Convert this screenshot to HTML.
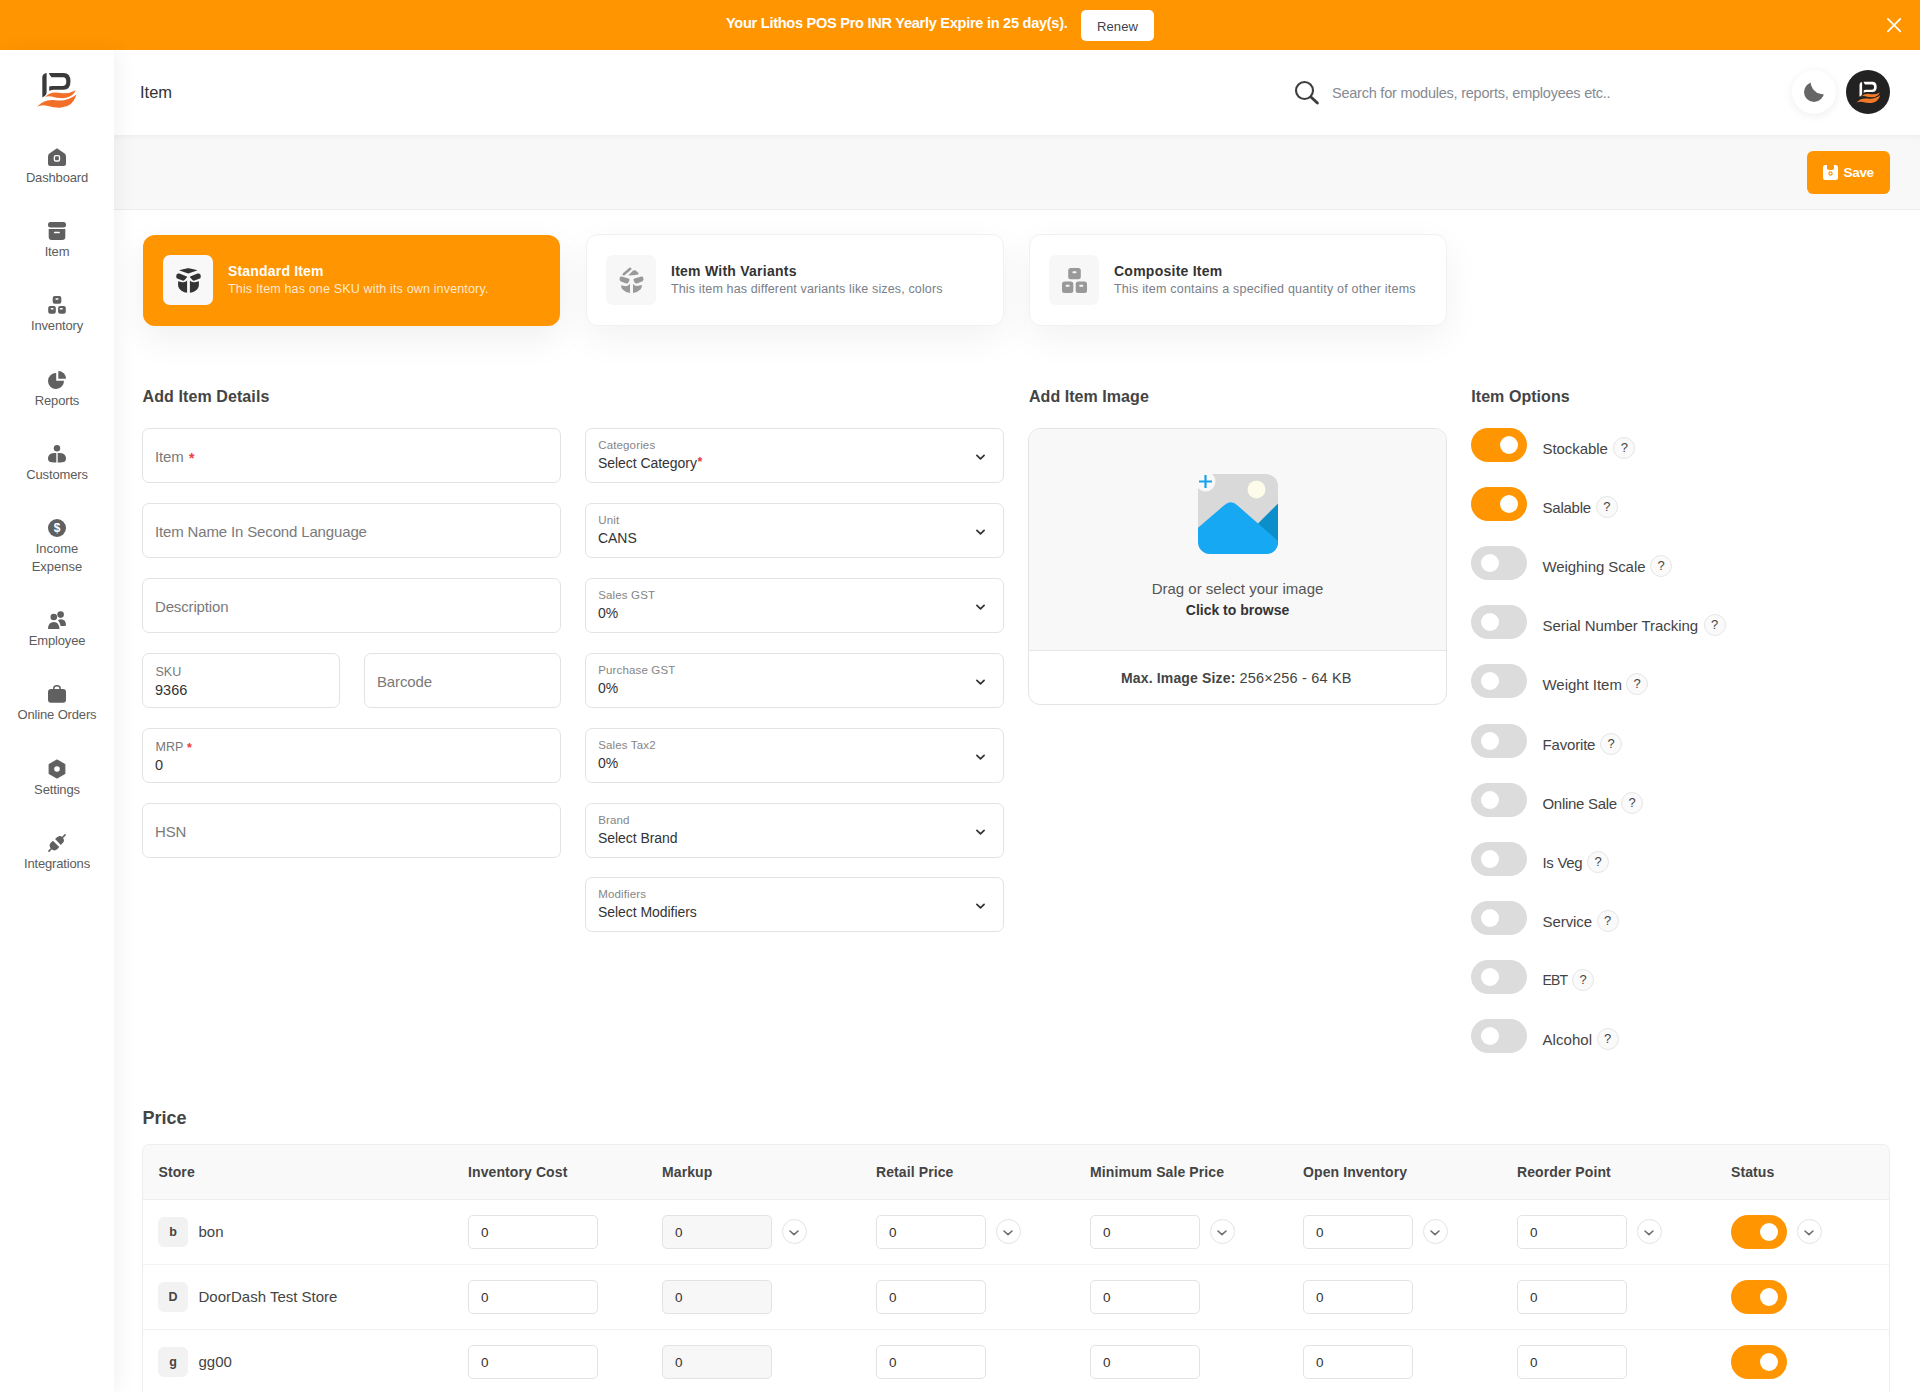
<!DOCTYPE html><html><head><meta charset="utf-8"><style>
*{box-sizing:border-box;margin:0;padding:0}
html,body{width:1920px;height:1392px;overflow:hidden;background:#fff;font-family:"Liberation Sans", sans-serif;color:#333}
.a{position:absolute}
.t{position:absolute;white-space:nowrap;line-height:1}
svg{position:absolute;overflow:visible}
</style></head><body>
<div class="a" style="left:0px;top:0px;width:1920px;height:50px;background:#ff9500"></div>
<div class="t" style="left:726px;top:16.29px;font-size:14.6px;color:#fff;font-weight:bold;letter-spacing:-0.29px;">Your Lithos POS Pro INR Yearly Expire in 25 day(s).</div>
<div class="a" style="left:1081px;top:10px;width:73px;height:31px;background:#fff;border-radius:5px"></div>
<div class="t" style="left:1097px;top:20.10px;font-size:13px;color:#3b4350;font-weight:normal;letter-spacing:0.1px;">Renew</div>
<svg style="left:1886px;top:17px" width="16" height="16" viewBox="0 0 16 16"><path d="M1.9 1.9L14.3 14.3M14.3 1.9L1.9 14.3" stroke="#fff" stroke-width="1.7" stroke-linecap="round"/></svg>
<div class="a" style="left:114px;top:50px;width:1806px;height:85px;background:#fff"></div>
<div class="a" style="left:114px;top:135px;width:1806px;height:75px;background:#f8f8f8;border-bottom:1px solid #ececec;box-shadow:inset 0 7px 9px -7px rgba(0,0,0,0.07)"></div>
<div class="t" style="left:140px;top:84.15px;font-size:16.5px;color:#333;font-weight:normal;">Item</div>
<svg style="left:1294px;top:80px" width="26" height="26" viewBox="0 0 26 26"><circle cx="10.5" cy="10.5" r="8.5" fill="none" stroke="#3d3d3d" stroke-width="2.1"/><path d="M17.2 17.2L23.4 23" stroke="#3d3d3d" stroke-width="2.9" stroke-linecap="round"/></svg>
<div class="t" style="left:1332px;top:85.61px;font-size:14.5px;color:#868a92;font-weight:normal;letter-spacing:-0.23px;">Search for modules, reports, employees etc..</div>
<div class="a" style="left:1792px;top:70px;width:44px;height:44px;background:#fff;border-radius:50%;box-shadow:0 2px 10px rgba(0,0,0,0.07)"></div>
<svg style="left:1804px;top:82px" width="20" height="20" viewBox="0 0 20 20"><defs><mask id="mm"><rect x="-5" y="-5" width="30" height="30" fill="#fff"/><circle cx="19.4" cy="-0.6" r="12.8" fill="#000"/></mask></defs><circle cx="10" cy="10" r="10" fill="#666" mask="url(#mm)"/></svg>
<div class="a" style="left:1846px;top:70px;width:44px;height:44px;background:#222;border-radius:50%"></div>
<svg style="left:1851.5px;top:74px" width="36.6" height="36.6" viewBox="0 0 60 60"><path d="M16.6 13 L16.6 32.5 Q16.6 34.5 15 35.8 L12.3 37.5 L12.3 17.5 Q12.3 13.6 16.6 13 Z" fill="#fff"/><path d="M19 12.9 L33.5 12.9 Q40.5 12.9 40.5 21.3 Q40.5 29.7 33.5 29.7 L23.5 29.7 Q20 29.9 19.2 31 L19.2 26.5 Q20.2 25.9 22.5 25.9 L33 25.9 Q36.3 25.9 36.3 21.5 Q36.3 17.2 33 17.2 L21.5 17.2 Q19.5 15.5 19 12.9Z" fill="#fff"/><path d="M14.7 37.5 Q20 31.5 28 32.8 Q38 34.5 45.9 30.2 Q42 37.8 33 38.2 Q26 38.2 21.5 36.5 Q17 35.5 14.7 37.5Z" fill="#f47a2a"/><path d="M7.1 47 Q14 38.5 26 40.3 Q36.5 42 46.5 34.5 Q43 46.5 31.5 47.6 Q24 48 18 46 Q11 44.3 7.1 47Z" fill="#f47a2a"/></svg>
<div class="a" style="left:1807px;top:151px;width:83px;height:43px;background:#ff9500;border-radius:6px"></div>
<svg style="left:1823px;top:165px" width="15" height="15" viewBox="0 0 15 15"><path d="M2.5 0 H4 V3.2 Q4 5 7.5 5 Q11 5 11 3.2 V0 H12.5 Q15 0 15 2.5 V12.5 Q15 15 12.5 15 H2.5 Q0 15 0 12.5 V2.5 Q0 0 2.5 0Z" fill="#fff"/><circle cx="7.5" cy="8.5" r="1.6" fill="none" stroke="#ff9500" stroke-width="1.2"/></svg>
<div class="t" style="left:1843.5px;top:165.74px;font-size:13.5px;color:#fff;font-weight:bold;letter-spacing:-0.3px;">Save</div>
<div class="a" style="left:0px;top:50px;width:114px;height:1342px;background:#fff;box-shadow:5px 0 18px rgba(0,0,0,0.05)"></div>
<svg style="left:30px;top:60px" width="60" height="60" viewBox="0 0 60 60"><path d="M16.6 13 L16.6 32.5 Q16.6 34.5 15 35.8 L12.3 37.5 L12.3 17.5 Q12.3 13.6 16.6 13 Z" fill="#3a3a3a"/><path d="M19 12.9 L33.5 12.9 Q40.5 12.9 40.5 21.3 Q40.5 29.7 33.5 29.7 L23.5 29.7 Q20 29.9 19.2 31 L19.2 26.5 Q20.2 25.9 22.5 25.9 L33 25.9 Q36.3 25.9 36.3 21.5 Q36.3 17.2 33 17.2 L21.5 17.2 Q19.5 15.5 19 12.9Z" fill="#3a3a3a"/><path d="M14.7 37.5 Q20 31.5 28 32.8 Q38 34.5 45.9 30.2 Q42 37.8 33 38.2 Q26 38.2 21.5 36.5 Q17 35.5 14.7 37.5Z" fill="#f26f2a"/><path d="M7.1 47 Q14 38.5 26 40.3 Q36.5 42 46.5 34.5 Q43 46.5 31.5 47.6 Q24 48 18 46 Q11 44.3 7.1 47Z" fill="#f26f2a"/></svg>
<svg style="left:48px;top:148px" width="18" height="18" viewBox="0 0 18 18"><path d="M9 0.3 L16.6 5.5 Q18 6.5 18 8.2 V15.5 Q18 18 15.5 18 H2.5 Q0 18 0 15.5 V8.2 Q0 6.5 1.4 5.5Z" fill="#606060"/><rect x="6.4" y="7.6" width="5.1" height="5.4" rx="1.3" fill="none" stroke="#fff" stroke-width="1.35"/></svg>
<div class="t" style="left:0px;width:114px;text-align:center;top:171.30px;font-size:13px;color:#5c5c5c;font-weight:normal;letter-spacing:-0.15px;">Dashboard</div>
<svg style="left:48px;top:222px" width="18" height="18" viewBox="0 0 18 18"><rect x="0" y="0" width="18" height="5.5" rx="2.5" fill="#606060"/><path d="M0.7 7 H17.3 V15 Q17.3 18 14.3 18 H3.7 Q0.7 18 0.7 15Z" fill="#606060"/><rect x="5.9" y="9.8" width="6" height="1.5" rx="0.7" fill="#fff"/></svg>
<div class="t" style="left:0px;width:114px;text-align:center;top:245.30px;font-size:13px;color:#5c5c5c;font-weight:normal;letter-spacing:-0.15px;">Item</div>
<svg style="left:48px;top:296px" width="18" height="18" viewBox="0 0 18 18"><rect x="4.7" y="0" width="8.6" height="7.8" rx="2" fill="#606060"/><rect x="0.2" y="9.9" width="7.6" height="7.8" rx="2" fill="#606060"/><rect x="10.1" y="9.9" width="7.7" height="7.8" rx="2" fill="#606060"/><rect x="7.5" y="2.2" width="3" height="1.5" rx="0.4" fill="#fff"/><rect x="2.8" y="11.9" width="2.7" height="1.5" rx="0.4" fill="#fff"/><rect x="11.8" y="11.9" width="2.9" height="1.5" rx="0.4" fill="#fff"/></svg>
<div class="t" style="left:0px;width:114px;text-align:center;top:319.30px;font-size:13px;color:#5c5c5c;font-weight:normal;letter-spacing:-0.15px;">Inventory</div>
<svg style="left:48px;top:371px" width="18" height="18" viewBox="0 0 18 18"><path d="M8.2 2 A8 8 0 1 0 16 9.8 H8.2Z" fill="#606060"/><path d="M10.3 0 A7.8 7.8 0 0 1 18 7.7 H10.3Z" fill="#606060"/></svg>
<div class="t" style="left:0px;width:114px;text-align:center;top:394.30px;font-size:13px;color:#5c5c5c;font-weight:normal;letter-spacing:-0.15px;">Reports</div>
<svg style="left:48px;top:445px" width="18" height="18" viewBox="0 0 18 18"><circle cx="9" cy="3.2" r="3.2" fill="#606060"/><path d="M8.3 8 V17.5 Q3 17.5 1.2 16.5 Q0 15.6 0 13.5 Q0 9.5 4 8.3 Q6 7.8 8.3 8Z" fill="#606060"/><path d="M9.7 8 V17.5 Q15 17.5 16.8 16.5 Q18 15.6 18 13.5 Q18 9.5 14 8.3 Q12 7.8 9.7 8Z" fill="#606060"/></svg>
<div class="t" style="left:0px;width:114px;text-align:center;top:468.30px;font-size:13px;color:#5c5c5c;font-weight:normal;letter-spacing:-0.15px;">Customers</div>
<svg style="left:48px;top:519px" width="18" height="18" viewBox="0 0 18 18"><circle cx="9" cy="9" r="9" fill="#606060"/><text x="9" y="13.3" text-anchor="middle" font-family="Liberation Sans" font-weight="bold" font-size="12" fill="#fff">$</text></svg>
<div class="t" style="left:0px;width:114px;text-align:center;top:542.30px;font-size:13px;color:#5c5c5c;font-weight:normal;">Income</div>
<div class="t" style="left:0px;width:114px;text-align:center;top:560.30px;font-size:13px;color:#5c5c5c;font-weight:normal;">Expense</div>
<svg style="left:48px;top:611px" width="18" height="18" viewBox="0 0 18 18"><circle cx="5.8" cy="6" r="3.3" fill="#606060"/><circle cx="12.6" cy="3.6" r="3.3" fill="#606060"/><path d="M0 18 Q0 11 6 11 Q11 11 11.5 18Z" fill="#606060"/><path d="M10 9.2 Q11.2 8.2 13 8.2 Q18 8.2 18 14.2 Q18 15 16.5 15 H12.6 Q12 11.5 10 9.2Z" fill="#606060"/></svg>
<div class="t" style="left:0px;width:114px;text-align:center;top:634.30px;font-size:13px;color:#5c5c5c;font-weight:normal;letter-spacing:-0.15px;">Employee</div>
<svg style="left:48px;top:685px" width="18" height="18" viewBox="0 0 18 18"><path d="M5.75 5 V3.6 Q5.75 0.7 9 0.7 Q12.2 0.7 12.2 3.6 V5" fill="none" stroke="#606060" stroke-width="1.5"/><rect x="0" y="4" width="18" height="13.7" rx="3" fill="#606060"/></svg>
<div class="t" style="left:0px;width:114px;text-align:center;top:708.30px;font-size:13px;color:#5c5c5c;font-weight:normal;letter-spacing:-0.15px;">Online Orders</div>
<svg style="left:48px;top:760px" width="18" height="18" viewBox="0 0 18 18"><path d="M9 0 L16.8 4.5 V13.5 L9 18 L1.2 13.5 V4.5Z" fill="#606060" stroke="#606060" stroke-width="1.2" stroke-linejoin="round"/><circle cx="9" cy="9" r="2.8" fill="#fff"/></svg>
<div class="t" style="left:0px;width:114px;text-align:center;top:783.30px;font-size:13px;color:#5c5c5c;font-weight:normal;letter-spacing:-0.15px;">Settings</div>
<svg style="left:48px;top:834px" width="18" height="18" viewBox="0 0 18 18"><g transform="rotate(45 9 9)"><path d="M4.9 7.6 V5.4 Q4.9 1.1 9 1.1 Q13.1 1.1 13.1 5.4 V7.6Z" fill="#606060"/><rect x="8.2" y="-3.2" width="1.6" height="5.2" rx="0.8" fill="#606060"/><path d="M4.5 10.3 H13.5 V12.9 Q13.5 17.2 9 17.2 Q4.5 17.2 4.5 12.9Z" fill="#606060"/><rect x="8.2" y="16" width="1.6" height="5.2" rx="0.8" fill="#606060"/></g></svg>
<div class="t" style="left:0px;width:114px;text-align:center;top:857.30px;font-size:13px;color:#5c5c5c;font-weight:normal;letter-spacing:-0.15px;">Integrations</div>
<div class="a" style="left:143px;top:235px;width:417px;height:91px;background:#ff9500;border-radius:12px;box-shadow:0 12px 36px rgba(0,0,0,0.065)"></div>
<div class="a" style="left:163px;top:255px;width:50px;height:50px;background:#f8f8f8;border-radius:7px"></div>
<div class="t" style="left:228px;top:264.27px;font-size:14px;color:#fff;font-weight:bold;letter-spacing:0.18px;">Standard Item</div>
<div class="t" style="left:228px;top:282.77px;font-size:12.5px;color:rgba(255,255,255,0.82);font-weight:normal;letter-spacing:0.16px;">This Item has one SKU with its own inventory.</div>
<svg style="left:176px;top:268px" width="25" height="25" viewBox="0 0 25 25"><path d="M3.6 2.6 Q3 2.2 4 1.9 L11.5 0.3 Q12.2 0.1 13 0.3 L20.6 1.9 Q21.6 2.2 21 2.6 L13 5.3 Q12.2 5.6 11.4 5.3Z" fill="#333"/><path d="M0.2 8.4 Q0 6.2 2 5.6 Q2.7 5.3 3.5 5.6 L10.8 8.4 Q11.4 8.7 11 9.3 L8.6 12 Q7.6 13 6.4 12.6 L1.2 10.6 Q0.3 10.1 0.2 8.4Z" fill="#333"/><path d="M24.8 8.4 Q25 6.2 23 5.6 Q22.3 5.3 21.5 5.6 L14.2 8.4 Q13.6 8.7 14 9.3 L16.4 12 Q17.4 13 18.6 12.6 L23.8 10.6 Q24.7 10.1 24.8 8.4Z" fill="#333"/><path d="M2.1 13.3 L6.2 14.2 Q9.6 14.6 11.1 12.6 V24.8 Q5.5 24 3.2 20.5 Q2.1 18.8 2.1 17Z" fill="#333"/><path d="M22.9 13.3 L18.8 14.2 Q15.4 14.6 13.9 12.6 V24.8 Q19.5 24 21.8 20.5 Q22.9 18.8 22.9 17Z" fill="#333"/></svg>
<div class="a" style="left:586px;top:234px;width:418px;height:92px;background:#fff;border:1px solid #f1f1f1;border-radius:12px;box-shadow:0 12px 36px rgba(0,0,0,0.055)"></div>
<div class="a" style="left:606px;top:255px;width:50px;height:50px;background:#f7f7f7;border-radius:7px"></div>
<div class="t" style="left:671px;top:264.27px;font-size:14px;color:#333;font-weight:bold;letter-spacing:0.25px;">Item With Variants</div>
<div class="t" style="left:671px;top:282.77px;font-size:12.5px;color:#7a7e86;font-weight:normal;letter-spacing:0.14px;">This item has different variants like sizes, colors</div>
<svg style="left:619px;top:268px" width="25" height="25" viewBox="0 0 25 25"><path d="M4.8 6.2 L11.2 0.8" stroke="#999" stroke-width="2.6" stroke-linecap="round"/><path d="M9.2 7.6 L13.6 3 Q15 1.6 16.6 2.6 L19 4.4 Q20.2 5.6 19.2 6.6 Q14 7.4 9.2 7.6Z" fill="#999"/><path d="M0.6 10.4 Q0.6 8.2 2.6 8.4 L9.6 10.6 Q11 11.2 10.4 12.6 L9.4 14.6 Q8.6 15.8 7.2 15.4 L2 13.6 Q0.6 13 0.6 11.6Z" fill="#999"/><path d="M24.4 10.4 Q24.4 8.2 22.4 8.4 L15.4 10.6 Q14 11.2 14.6 12.6 L15.6 14.6 Q16.4 15.8 17.8 15.4 L23 13.6 Q24.4 13 24.4 11.6Z" fill="#999"/><path d="M2.2 17.2 L6.8 18.2 Q9.6 18.2 11 15.8 V25 Q6 24.2 3.6 21.6 Q2.2 20 2.2 18.5Z" fill="#999"/><path d="M22.8 17 L18.2 18 Q15.4 18.2 14 15.8 V25 Q19 24.2 21.4 21.6 Q22.8 20 22.8 18.5Z" fill="#999"/></svg>
<div class="a" style="left:1029px;top:234px;width:418px;height:92px;background:#fff;border:1px solid #f1f1f1;border-radius:12px;box-shadow:0 12px 36px rgba(0,0,0,0.055)"></div>
<div class="a" style="left:1049px;top:255px;width:50px;height:50px;background:#f7f7f7;border-radius:7px"></div>
<div class="t" style="left:1114px;top:264.27px;font-size:14px;color:#333;font-weight:bold;letter-spacing:0.25px;">Composite Item</div>
<div class="t" style="left:1114px;top:282.77px;font-size:12.5px;color:#7a7e86;font-weight:normal;letter-spacing:0.21px;">This item contains a specified quantity of other items</div>
<svg style="left:1062px;top:268px" width="25" height="25" viewBox="0 0 25 25"><rect x="6.2" y="0" width="12.6" height="11.3" rx="2.5" fill="#999"/><rect x="0" y="13.5" width="11.3" height="11.5" rx="2.5" fill="#999"/><rect x="13.7" y="13.5" width="11.3" height="11.5" rx="2.5" fill="#999"/><rect x="10.5" y="3.3" width="4" height="2" rx="0.8" fill="#f7f7f7"/><rect x="3.6" y="16.8" width="4" height="2" rx="0.8" fill="#f7f7f7"/><rect x="17.3" y="16.8" width="4" height="2" rx="0.8" fill="#f7f7f7"/></svg>
<div class="t" style="left:142.5px;top:389.11px;font-size:16px;color:#444;font-weight:bold;letter-spacing:0.1px;">Add Item Details</div>
<div class="t" style="left:1029px;top:389.11px;font-size:16px;color:#444;font-weight:bold;letter-spacing:0.05px;">Add Item Image</div>
<div class="t" style="left:1471.3px;top:389.11px;font-size:16px;color:#444;font-weight:bold;letter-spacing:0.05px;">Item Options</div>
<div class="a" style="left:142px;top:428px;width:419px;height:55px;border:1px solid #e3e3e3;border-radius:7px;background:#fff"></div>
<div class="t" style="left:155px;top:449.04px;font-size:15px;color:#7a7a7a;font-weight:normal;letter-spacing:-0.15px;">Item</div>
<div class="t" style="left:189px;top:450.67px;font-size:14px;color:#f03a3a;font-weight:bold;">*</div>
<div class="a" style="left:142px;top:503px;width:419px;height:55px;border:1px solid #e3e3e3;border-radius:7px;background:#fff"></div>
<div class="t" style="left:155px;top:524.04px;font-size:15px;color:#7a7a7a;font-weight:normal;letter-spacing:-0.15px;">Item Name In Second Language</div>
<div class="a" style="left:142px;top:578px;width:419px;height:55px;border:1px solid #e3e3e3;border-radius:7px;background:#fff"></div>
<div class="t" style="left:155px;top:599.04px;font-size:15px;color:#7a7a7a;font-weight:normal;letter-spacing:-0.15px;">Description</div>
<div class="a" style="left:142px;top:653px;width:198px;height:55px;border:1px solid #e3e3e3;border-radius:7px;background:#fff"></div>
<div class="t" style="left:155.5px;top:665.97px;font-size:12.5px;color:#777;font-weight:normal;">SKU</div>
<div class="t" style="left:155px;top:683.31px;font-size:14.5px;color:#333;font-weight:normal;">9366</div>
<div class="a" style="left:364px;top:653px;width:197px;height:55px;border:1px solid #e3e3e3;border-radius:7px;background:#fff"></div>
<div class="t" style="left:377px;top:674.04px;font-size:15px;color:#7a7a7a;font-weight:normal;letter-spacing:-0.15px;">Barcode</div>
<div class="a" style="left:142px;top:728px;width:419px;height:55px;border:1px solid #e3e3e3;border-radius:7px;background:#fff"></div>
<div class="t" style="left:155.5px;top:740.97px;font-size:12.5px;color:#777;font-weight:normal;">MRP</div>
<div class="t" style="left:187px;top:741.57px;font-size:12.5px;color:#f03a3a;font-weight:bold;">*</div>
<div class="t" style="left:155px;top:758.31px;font-size:14.5px;color:#333;font-weight:normal;">0</div>
<div class="a" style="left:142px;top:803px;width:419px;height:55px;border:1px solid #e3e3e3;border-radius:7px;background:#fff"></div>
<div class="t" style="left:155px;top:824.04px;font-size:15px;color:#7a7a7a;font-weight:normal;letter-spacing:-0.15px;">HSN</div>
<div class="a" style="left:585px;top:428px;width:419px;height:55px;border:1px solid #e3e3e3;border-radius:7px;background:#fff"></div>
<div class="t" style="left:598.2px;top:440.30px;font-size:11.5px;color:#858585;font-weight:normal;letter-spacing:0.15px;">Categories</div>
<div class="t" style="left:598px;top:456.17px;font-size:14px;color:#333;font-weight:normal;letter-spacing:-0.05px;">Select Category</div>
<div class="t" style="left:697.5px;top:455.87px;font-size:12.5px;color:#e53935;font-weight:bold;">*</div>
<svg style="left:976px;top:453.6px" width="10" height="7" viewBox="0 0 10 7"><path d="M0.9 1.4 L4.5 4.9 L8.1 1.4" fill="none" stroke="#333" stroke-width="1.7" stroke-linecap="round" stroke-linejoin="round"/></svg>
<div class="a" style="left:585px;top:503px;width:419px;height:55px;border:1px solid #e3e3e3;border-radius:7px;background:#fff"></div>
<div class="t" style="left:598.2px;top:515.30px;font-size:11.5px;color:#858585;font-weight:normal;letter-spacing:0.15px;">Unit</div>
<div class="t" style="left:598px;top:531.17px;font-size:14px;color:#333;font-weight:normal;letter-spacing:-0.05px;">CANS</div>
<svg style="left:976px;top:528.6px" width="10" height="7" viewBox="0 0 10 7"><path d="M0.9 1.4 L4.5 4.9 L8.1 1.4" fill="none" stroke="#333" stroke-width="1.7" stroke-linecap="round" stroke-linejoin="round"/></svg>
<div class="a" style="left:585px;top:578px;width:419px;height:55px;border:1px solid #e3e3e3;border-radius:7px;background:#fff"></div>
<div class="t" style="left:598.2px;top:590.30px;font-size:11.5px;color:#858585;font-weight:normal;letter-spacing:0.15px;">Sales GST</div>
<div class="t" style="left:598px;top:606.17px;font-size:14px;color:#333;font-weight:normal;letter-spacing:-0.05px;">0%</div>
<svg style="left:976px;top:603.6px" width="10" height="7" viewBox="0 0 10 7"><path d="M0.9 1.4 L4.5 4.9 L8.1 1.4" fill="none" stroke="#333" stroke-width="1.7" stroke-linecap="round" stroke-linejoin="round"/></svg>
<div class="a" style="left:585px;top:653px;width:419px;height:55px;border:1px solid #e3e3e3;border-radius:7px;background:#fff"></div>
<div class="t" style="left:598.2px;top:665.30px;font-size:11.5px;color:#858585;font-weight:normal;letter-spacing:0.15px;">Purchase GST</div>
<div class="t" style="left:598px;top:681.17px;font-size:14px;color:#333;font-weight:normal;letter-spacing:-0.05px;">0%</div>
<svg style="left:976px;top:678.6px" width="10" height="7" viewBox="0 0 10 7"><path d="M0.9 1.4 L4.5 4.9 L8.1 1.4" fill="none" stroke="#333" stroke-width="1.7" stroke-linecap="round" stroke-linejoin="round"/></svg>
<div class="a" style="left:585px;top:728px;width:419px;height:55px;border:1px solid #e3e3e3;border-radius:7px;background:#fff"></div>
<div class="t" style="left:598.2px;top:740.30px;font-size:11.5px;color:#858585;font-weight:normal;letter-spacing:0.15px;">Sales Tax2</div>
<div class="t" style="left:598px;top:756.17px;font-size:14px;color:#333;font-weight:normal;letter-spacing:-0.05px;">0%</div>
<svg style="left:976px;top:753.6px" width="10" height="7" viewBox="0 0 10 7"><path d="M0.9 1.4 L4.5 4.9 L8.1 1.4" fill="none" stroke="#333" stroke-width="1.7" stroke-linecap="round" stroke-linejoin="round"/></svg>
<div class="a" style="left:585px;top:803px;width:419px;height:55px;border:1px solid #e3e3e3;border-radius:7px;background:#fff"></div>
<div class="t" style="left:598.2px;top:815.30px;font-size:11.5px;color:#858585;font-weight:normal;letter-spacing:0.15px;">Brand</div>
<div class="t" style="left:598px;top:831.17px;font-size:14px;color:#333;font-weight:normal;letter-spacing:-0.05px;">Select Brand</div>
<svg style="left:976px;top:828.6px" width="10" height="7" viewBox="0 0 10 7"><path d="M0.9 1.4 L4.5 4.9 L8.1 1.4" fill="none" stroke="#333" stroke-width="1.7" stroke-linecap="round" stroke-linejoin="round"/></svg>
<div class="a" style="left:585px;top:877px;width:419px;height:55px;border:1px solid #e3e3e3;border-radius:7px;background:#fff"></div>
<div class="t" style="left:598.2px;top:889.30px;font-size:11.5px;color:#858585;font-weight:normal;letter-spacing:0.15px;">Modifiers</div>
<div class="t" style="left:598px;top:905.17px;font-size:14px;color:#333;font-weight:normal;letter-spacing:-0.05px;">Select Modifiers</div>
<svg style="left:976px;top:902.6px" width="10" height="7" viewBox="0 0 10 7"><path d="M0.9 1.4 L4.5 4.9 L8.1 1.4" fill="none" stroke="#333" stroke-width="1.7" stroke-linecap="round" stroke-linejoin="round"/></svg>
<div class="a" style="left:1028px;top:428px;width:419px;height:277px;border:1px solid #e4e4e4;border-radius:12px;background:#fff;overflow:hidden"></div>
<div class="a" style="left:1029px;top:429px;width:417px;height:222px;background:#f8f8f8;border-radius:11px 11px 0 0;border-bottom:1px solid #e6e6e6"></div>
<svg style="left:1186px;top:468px" width="95" height="90" viewBox="0 0 95 90"><defs><clipPath id="ic"><rect x="12" y="6" width="80" height="80" rx="12"/></clipPath></defs><rect x="12" y="6" width="80" height="80" rx="12" fill="#d9d9d9"/><g clip-path="url(#ic)"><circle cx="70.5" cy="21.5" r="9" fill="#fdfbea"/><path d="M72 55.5 L92 35.6 V100 Z" fill="#0b8ec9"/><path d="M0 70 L38.5 37 Q45 31.5 51.5 37.5 L100 80 V100 H0Z" fill="#17a8f3"/></g><circle cx="19.5" cy="13.5" r="10" fill="#f8f8f8"/><path d="M19.5 7 V20 M13 13.5 H26" stroke="#17a2ec" stroke-width="2.2"/></svg>
<div class="t" style="left:1028px;width:419px;text-align:center;top:581.24px;font-size:15px;color:#555;font-weight:normal;">Drag or select your image</div>
<div class="t" style="left:1028px;width:419px;text-align:center;top:602.67px;font-size:14px;color:#333;font-weight:bold;">Click to browse</div>
<div class="t" style="left:1121px;top:670.87px;font-size:14px;color:#444;font-weight:bold;letter-spacing:0.15px;">Max. Image Size:</div>
<div class="t" style="left:1239.5px;top:670.81px;font-size:14.5px;color:#444;font-weight:normal;letter-spacing:0.2px;">256×256 - 64 KB</div>
<div class="a" style="left:1471px;top:428px;width:56px;height:34px;background:#ff9500;border-radius:17px"></div>
<div class="a" style="left:1500px;top:436px;width:18px;height:18px;background:#fff;border-radius:50%"></div>
<div class="t" style="left:1542.5px;top:440.74px;font-size:15px;color:#444;font-weight:normal;letter-spacing:-0.075px;">Stockable</div>
<div class="a" style="left:1613.4px;top:436.5px;width:22px;height:22px;border:1px solid #e6e6e6;border-radius:50%;background:#fafafa"></div>
<div class="t" style="left:1613.4px;width:22px;text-align:center;top:441.30px;font-size:13px;color:#444;font-weight:normal;">?</div>
<div class="a" style="left:1471px;top:487px;width:56px;height:34px;background:#ff9500;border-radius:17px"></div>
<div class="a" style="left:1500px;top:495px;width:18px;height:18px;background:#fff;border-radius:50%"></div>
<div class="t" style="left:1542.5px;top:499.74px;font-size:15px;color:#444;font-weight:normal;letter-spacing:-0.236px;">Salable</div>
<div class="a" style="left:1595.8px;top:495.5px;width:22px;height:22px;border:1px solid #e6e6e6;border-radius:50%;background:#fafafa"></div>
<div class="t" style="left:1595.8px;width:22px;text-align:center;top:500.30px;font-size:13px;color:#444;font-weight:normal;">?</div>
<div class="a" style="left:1471px;top:546px;width:56px;height:34px;background:#dcdcdc;border-radius:17px"></div>
<div class="a" style="left:1481px;top:554px;width:18px;height:18px;background:#fff;border-radius:50%"></div>
<div class="t" style="left:1542.5px;top:558.74px;font-size:15px;color:#444;font-weight:normal;letter-spacing:-0.075px;">Weighing Scale</div>
<div class="a" style="left:1650px;top:554.5px;width:22px;height:22px;border:1px solid #e6e6e6;border-radius:50%;background:#fafafa"></div>
<div class="t" style="left:1650px;width:22px;text-align:center;top:559.30px;font-size:13px;color:#444;font-weight:normal;">?</div>
<div class="a" style="left:1471px;top:605px;width:56px;height:34px;background:#dcdcdc;border-radius:17px"></div>
<div class="a" style="left:1481px;top:613px;width:18px;height:18px;background:#fff;border-radius:50%"></div>
<div class="t" style="left:1542.5px;top:617.74px;font-size:15px;color:#444;font-weight:normal;letter-spacing:-0.051px;">Serial Number Tracking</div>
<div class="a" style="left:1703.5px;top:613.5px;width:22px;height:22px;border:1px solid #e6e6e6;border-radius:50%;background:#fafafa"></div>
<div class="t" style="left:1703.5px;width:22px;text-align:center;top:618.30px;font-size:13px;color:#444;font-weight:normal;">?</div>
<div class="a" style="left:1471px;top:664px;width:56px;height:34px;background:#dcdcdc;border-radius:17px"></div>
<div class="a" style="left:1481px;top:672px;width:18px;height:18px;background:#fff;border-radius:50%"></div>
<div class="t" style="left:1542.5px;top:676.74px;font-size:15px;color:#444;font-weight:normal;letter-spacing:-0.034px;">Weight Item</div>
<div class="a" style="left:1626px;top:672.5px;width:22px;height:22px;border:1px solid #e6e6e6;border-radius:50%;background:#fafafa"></div>
<div class="t" style="left:1626px;width:22px;text-align:center;top:677.30px;font-size:13px;color:#444;font-weight:normal;">?</div>
<div class="a" style="left:1471px;top:724px;width:56px;height:34px;background:#dcdcdc;border-radius:17px"></div>
<div class="a" style="left:1481px;top:732px;width:18px;height:18px;background:#fff;border-radius:50%"></div>
<div class="t" style="left:1542.5px;top:736.74px;font-size:15px;color:#444;font-weight:normal;letter-spacing:-0.174px;">Favorite</div>
<div class="a" style="left:1600px;top:732.5px;width:22px;height:22px;border:1px solid #e6e6e6;border-radius:50%;background:#fafafa"></div>
<div class="t" style="left:1600px;width:22px;text-align:center;top:737.30px;font-size:13px;color:#444;font-weight:normal;">?</div>
<div class="a" style="left:1471px;top:783px;width:56px;height:34px;background:#dcdcdc;border-radius:17px"></div>
<div class="a" style="left:1481px;top:791px;width:18px;height:18px;background:#fff;border-radius:50%"></div>
<div class="t" style="left:1542.5px;top:795.74px;font-size:15px;color:#444;font-weight:normal;letter-spacing:-0.296px;">Online Sale</div>
<div class="a" style="left:1621px;top:791.5px;width:22px;height:22px;border:1px solid #e6e6e6;border-radius:50%;background:#fafafa"></div>
<div class="t" style="left:1621px;width:22px;text-align:center;top:796.30px;font-size:13px;color:#444;font-weight:normal;">?</div>
<div class="a" style="left:1471px;top:842px;width:56px;height:34px;background:#dcdcdc;border-radius:17px"></div>
<div class="a" style="left:1481px;top:850px;width:18px;height:18px;background:#fff;border-radius:50%"></div>
<div class="t" style="left:1542.5px;top:854.74px;font-size:15px;color:#444;font-weight:normal;letter-spacing:-0.317px;">Is Veg</div>
<div class="a" style="left:1587px;top:850.5px;width:22px;height:22px;border:1px solid #e6e6e6;border-radius:50%;background:#fafafa"></div>
<div class="t" style="left:1587px;width:22px;text-align:center;top:855.30px;font-size:13px;color:#444;font-weight:normal;">?</div>
<div class="a" style="left:1471px;top:901px;width:56px;height:34px;background:#dcdcdc;border-radius:17px"></div>
<div class="a" style="left:1481px;top:909px;width:18px;height:18px;background:#fff;border-radius:50%"></div>
<div class="t" style="left:1542.5px;top:913.74px;font-size:15px;color:#444;font-weight:normal;letter-spacing:-0.061px;">Service</div>
<div class="a" style="left:1596.5px;top:909.5px;width:22px;height:22px;border:1px solid #e6e6e6;border-radius:50%;background:#fafafa"></div>
<div class="t" style="left:1596.5px;width:22px;text-align:center;top:914.30px;font-size:13px;color:#444;font-weight:normal;">?</div>
<div class="a" style="left:1471px;top:960px;width:56px;height:34px;background:#dcdcdc;border-radius:17px"></div>
<div class="a" style="left:1481px;top:968px;width:18px;height:18px;background:#fff;border-radius:50%"></div>
<div class="t" style="left:1542.5px;top:973.17px;font-size:14px;color:#444;font-weight:normal;letter-spacing:-0.8px;">EBT</div>
<div class="a" style="left:1572px;top:968.5px;width:22px;height:22px;border:1px solid #e6e6e6;border-radius:50%;background:#fafafa"></div>
<div class="t" style="left:1572px;width:22px;text-align:center;top:973.30px;font-size:13px;color:#444;font-weight:normal;">?</div>
<div class="a" style="left:1471px;top:1019px;width:56px;height:34px;background:#dcdcdc;border-radius:17px"></div>
<div class="a" style="left:1481px;top:1027px;width:18px;height:18px;background:#fff;border-radius:50%"></div>
<div class="t" style="left:1542.5px;top:1031.74px;font-size:15px;color:#444;font-weight:normal;letter-spacing:0.057px;">Alcohol</div>
<div class="a" style="left:1596.5px;top:1027.5px;width:22px;height:22px;border:1px solid #e6e6e6;border-radius:50%;background:#fafafa"></div>
<div class="t" style="left:1596.5px;width:22px;text-align:center;top:1032.30px;font-size:13px;color:#444;font-weight:normal;">?</div>
<div class="t" style="left:142.5px;top:1109.25px;font-size:18px;color:#444;font-weight:bold;">Price</div>
<div class="a" style="left:142px;top:1144px;width:1748px;height:260px;border:1px solid #ededed;border-radius:7px;background:#fff;overflow:hidden"></div>
<div class="a" style="left:143px;top:1145px;width:1746px;height:55px;background:#f9f9f9;border-bottom:1px solid #ededed;border-radius:6px 6px 0 0"></div>
<div class="t" style="left:158.5px;top:1165.17px;font-size:14px;color:#444;font-weight:bold;letter-spacing:0.1px;">Store</div>
<div class="t" style="left:468px;top:1165.17px;font-size:14px;color:#444;font-weight:bold;letter-spacing:0.1px;">Inventory Cost</div>
<div class="t" style="left:662px;top:1165.17px;font-size:14px;color:#444;font-weight:bold;letter-spacing:0.1px;">Markup</div>
<div class="t" style="left:876px;top:1165.17px;font-size:14px;color:#444;font-weight:bold;letter-spacing:0.1px;">Retail Price</div>
<div class="t" style="left:1090px;top:1165.17px;font-size:14px;color:#444;font-weight:bold;letter-spacing:0.1px;">Minimum Sale Price</div>
<div class="t" style="left:1303px;top:1165.17px;font-size:14px;color:#444;font-weight:bold;letter-spacing:0.1px;">Open Inventory</div>
<div class="t" style="left:1517px;top:1165.17px;font-size:14px;color:#444;font-weight:bold;letter-spacing:0.1px;">Reorder Point</div>
<div class="t" style="left:1731px;top:1165.17px;font-size:14px;color:#444;font-weight:bold;letter-spacing:0.1px;">Status</div>
<div class="a" style="left:158px;top:1216.5px;width:30px;height:30px;background:#f2f2f2;border-radius:6px"></div>
<div class="t" style="left:158px;width:30px;text-align:center;top:1226.37px;font-size:12.5px;color:#444;font-weight:bold;">b</div>
<div class="t" style="left:198.5px;top:1224.24px;font-size:15px;color:#444;font-weight:normal;">bon</div>
<div class="a" style="left:468px;top:1215px;width:130px;height:34px;border:1px solid #e3e3e3;border-radius:5px;background:#fff"></div>
<div class="t" style="left:481px;top:1225.74px;font-size:13.5px;color:#333;font-weight:normal;">0</div>
<div class="a" style="left:662px;top:1215px;width:110px;height:34px;border:1px solid #e3e3e3;border-radius:5px;background:#f7f7f7"></div>
<div class="t" style="left:675px;top:1225.74px;font-size:13.5px;color:#333;font-weight:normal;">0</div>
<div class="a" style="left:876px;top:1215px;width:110px;height:34px;border:1px solid #e3e3e3;border-radius:5px;background:#fff"></div>
<div class="t" style="left:889px;top:1225.74px;font-size:13.5px;color:#333;font-weight:normal;">0</div>
<div class="a" style="left:1090px;top:1215px;width:110px;height:34px;border:1px solid #e3e3e3;border-radius:5px;background:#fff"></div>
<div class="t" style="left:1103px;top:1225.74px;font-size:13.5px;color:#333;font-weight:normal;">0</div>
<div class="a" style="left:1303px;top:1215px;width:110px;height:34px;border:1px solid #e3e3e3;border-radius:5px;background:#fff"></div>
<div class="t" style="left:1316px;top:1225.74px;font-size:13.5px;color:#333;font-weight:normal;">0</div>
<div class="a" style="left:1517px;top:1215px;width:110px;height:34px;border:1px solid #e3e3e3;border-radius:5px;background:#fff"></div>
<div class="t" style="left:1530px;top:1225.74px;font-size:13.5px;color:#333;font-weight:normal;">0</div>
<div class="a" style="left:1731px;top:1215px;width:56px;height:34px;background:#ff9500;border-radius:17px"></div>
<div class="a" style="left:1760px;top:1223px;width:18px;height:18px;background:#fff;border-radius:50%"></div>
<div class="a" style="left:782.0px;top:1219.0px;width:25px;height:25px;border:1px solid #e3e3e3;border-radius:50%;background:#fff"></div>
<svg style="left:789.2px;top:1230.0px" width="10" height="6" viewBox="0 0 10 6"><path d="M1 1 L5 4.6 L9 1" fill="none" stroke="#6e6e6e" stroke-width="1.6" stroke-linecap="round" stroke-linejoin="round"/></svg>
<div class="a" style="left:996.0px;top:1219.0px;width:25px;height:25px;border:1px solid #e3e3e3;border-radius:50%;background:#fff"></div>
<svg style="left:1003.2px;top:1230.0px" width="10" height="6" viewBox="0 0 10 6"><path d="M1 1 L5 4.6 L9 1" fill="none" stroke="#6e6e6e" stroke-width="1.6" stroke-linecap="round" stroke-linejoin="round"/></svg>
<div class="a" style="left:1209.5px;top:1219.0px;width:25px;height:25px;border:1px solid #e3e3e3;border-radius:50%;background:#fff"></div>
<svg style="left:1216.7px;top:1230.0px" width="10" height="6" viewBox="0 0 10 6"><path d="M1 1 L5 4.6 L9 1" fill="none" stroke="#6e6e6e" stroke-width="1.6" stroke-linecap="round" stroke-linejoin="round"/></svg>
<div class="a" style="left:1423.0px;top:1219.0px;width:25px;height:25px;border:1px solid #e3e3e3;border-radius:50%;background:#fff"></div>
<svg style="left:1430.2px;top:1230.0px" width="10" height="6" viewBox="0 0 10 6"><path d="M1 1 L5 4.6 L9 1" fill="none" stroke="#6e6e6e" stroke-width="1.6" stroke-linecap="round" stroke-linejoin="round"/></svg>
<div class="a" style="left:1637.0px;top:1219.0px;width:25px;height:25px;border:1px solid #e3e3e3;border-radius:50%;background:#fff"></div>
<svg style="left:1644.2px;top:1230.0px" width="10" height="6" viewBox="0 0 10 6"><path d="M1 1 L5 4.6 L9 1" fill="none" stroke="#6e6e6e" stroke-width="1.6" stroke-linecap="round" stroke-linejoin="round"/></svg>
<div class="a" style="left:1797.0px;top:1219.0px;width:25px;height:25px;border:1px solid #e3e3e3;border-radius:50%;background:#fff"></div>
<svg style="left:1804.2px;top:1230.0px" width="10" height="6" viewBox="0 0 10 6"><path d="M1 1 L5 4.6 L9 1" fill="none" stroke="#6e6e6e" stroke-width="1.6" stroke-linecap="round" stroke-linejoin="round"/></svg>
<div class="a" style="left:143px;top:1264px;width:1746px;height:1px;background:#f3f3f3"></div>
<div class="a" style="left:158px;top:1281.5px;width:30px;height:30px;background:#f2f2f2;border-radius:6px"></div>
<div class="t" style="left:158px;width:30px;text-align:center;top:1291.37px;font-size:12.5px;color:#444;font-weight:bold;">D</div>
<div class="t" style="left:198.5px;top:1289.24px;font-size:15px;color:#444;font-weight:normal;">DoorDash Test Store</div>
<div class="a" style="left:468px;top:1280px;width:130px;height:34px;border:1px solid #e3e3e3;border-radius:5px;background:#fff"></div>
<div class="t" style="left:481px;top:1290.74px;font-size:13.5px;color:#333;font-weight:normal;">0</div>
<div class="a" style="left:662px;top:1280px;width:110px;height:34px;border:1px solid #e3e3e3;border-radius:5px;background:#f7f7f7"></div>
<div class="t" style="left:675px;top:1290.74px;font-size:13.5px;color:#333;font-weight:normal;">0</div>
<div class="a" style="left:876px;top:1280px;width:110px;height:34px;border:1px solid #e3e3e3;border-radius:5px;background:#fff"></div>
<div class="t" style="left:889px;top:1290.74px;font-size:13.5px;color:#333;font-weight:normal;">0</div>
<div class="a" style="left:1090px;top:1280px;width:110px;height:34px;border:1px solid #e3e3e3;border-radius:5px;background:#fff"></div>
<div class="t" style="left:1103px;top:1290.74px;font-size:13.5px;color:#333;font-weight:normal;">0</div>
<div class="a" style="left:1303px;top:1280px;width:110px;height:34px;border:1px solid #e3e3e3;border-radius:5px;background:#fff"></div>
<div class="t" style="left:1316px;top:1290.74px;font-size:13.5px;color:#333;font-weight:normal;">0</div>
<div class="a" style="left:1517px;top:1280px;width:110px;height:34px;border:1px solid #e3e3e3;border-radius:5px;background:#fff"></div>
<div class="t" style="left:1530px;top:1290.74px;font-size:13.5px;color:#333;font-weight:normal;">0</div>
<div class="a" style="left:1731px;top:1280px;width:56px;height:34px;background:#ff9500;border-radius:17px"></div>
<div class="a" style="left:1760px;top:1288px;width:18px;height:18px;background:#fff;border-radius:50%"></div>
<div class="a" style="left:143px;top:1329px;width:1746px;height:1px;background:#f3f3f3"></div>
<div class="a" style="left:158px;top:1346.5px;width:30px;height:30px;background:#f2f2f2;border-radius:6px"></div>
<div class="t" style="left:158px;width:30px;text-align:center;top:1356.37px;font-size:12.5px;color:#444;font-weight:bold;">g</div>
<div class="t" style="left:198.5px;top:1354.24px;font-size:15px;color:#444;font-weight:normal;">gg00</div>
<div class="a" style="left:468px;top:1345px;width:130px;height:34px;border:1px solid #e3e3e3;border-radius:5px;background:#fff"></div>
<div class="t" style="left:481px;top:1355.74px;font-size:13.5px;color:#333;font-weight:normal;">0</div>
<div class="a" style="left:662px;top:1345px;width:110px;height:34px;border:1px solid #e3e3e3;border-radius:5px;background:#f7f7f7"></div>
<div class="t" style="left:675px;top:1355.74px;font-size:13.5px;color:#333;font-weight:normal;">0</div>
<div class="a" style="left:876px;top:1345px;width:110px;height:34px;border:1px solid #e3e3e3;border-radius:5px;background:#fff"></div>
<div class="t" style="left:889px;top:1355.74px;font-size:13.5px;color:#333;font-weight:normal;">0</div>
<div class="a" style="left:1090px;top:1345px;width:110px;height:34px;border:1px solid #e3e3e3;border-radius:5px;background:#fff"></div>
<div class="t" style="left:1103px;top:1355.74px;font-size:13.5px;color:#333;font-weight:normal;">0</div>
<div class="a" style="left:1303px;top:1345px;width:110px;height:34px;border:1px solid #e3e3e3;border-radius:5px;background:#fff"></div>
<div class="t" style="left:1316px;top:1355.74px;font-size:13.5px;color:#333;font-weight:normal;">0</div>
<div class="a" style="left:1517px;top:1345px;width:110px;height:34px;border:1px solid #e3e3e3;border-radius:5px;background:#fff"></div>
<div class="t" style="left:1530px;top:1355.74px;font-size:13.5px;color:#333;font-weight:normal;">0</div>
<div class="a" style="left:1731px;top:1345px;width:56px;height:34px;background:#ff9500;border-radius:17px"></div>
<div class="a" style="left:1760px;top:1353px;width:18px;height:18px;background:#fff;border-radius:50%"></div></body></html>
